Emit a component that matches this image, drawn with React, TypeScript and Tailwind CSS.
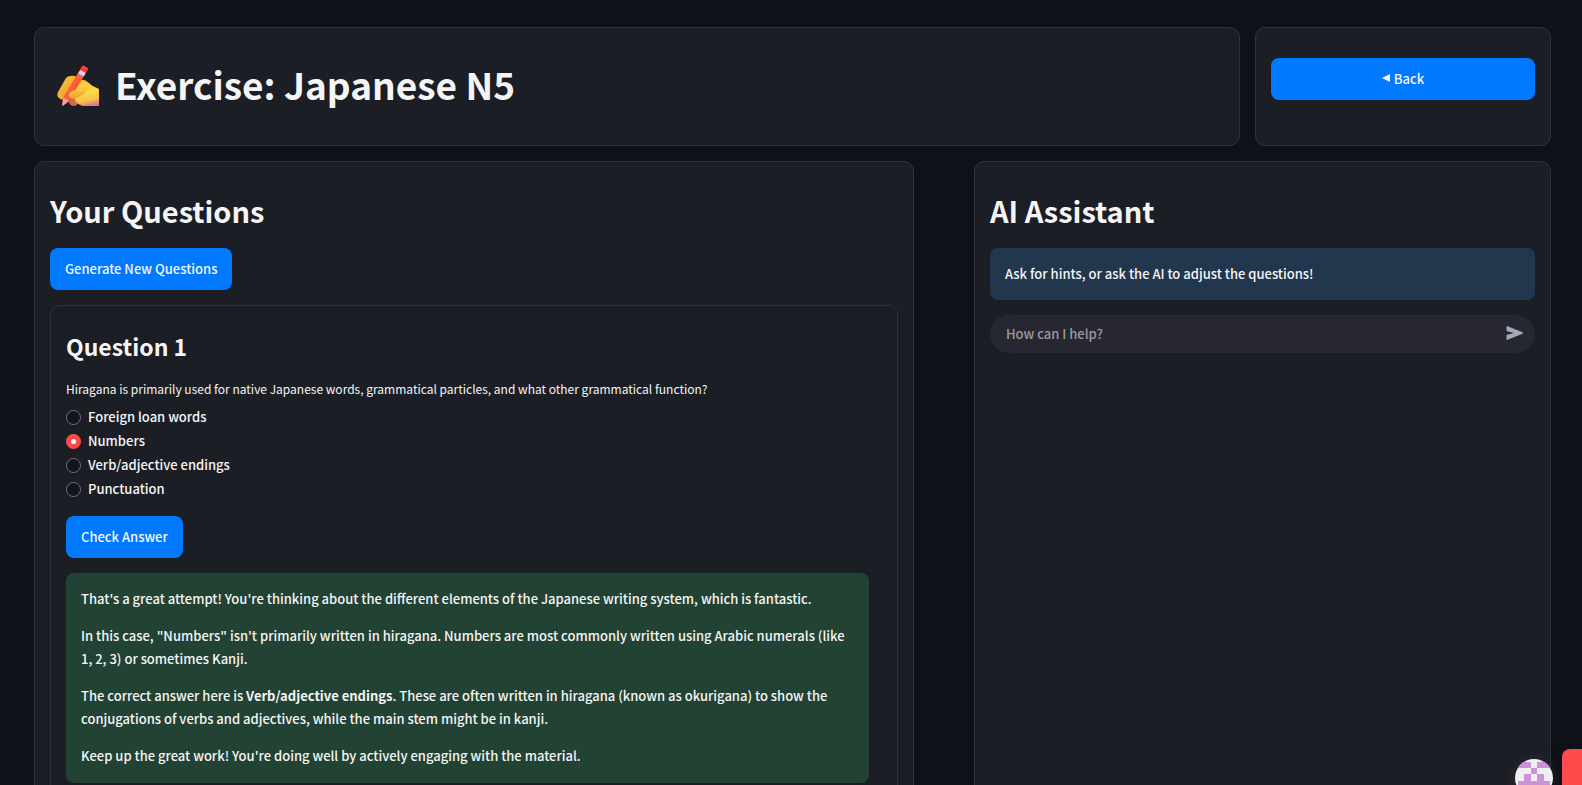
import { useState } from "react";
import type { ReactNode } from "react";

const OPTIONS = ["Foreign loan words", "Numbers", "Verb/adjective endings", "Punctuation"];

function Card({ children, className = "" }: { children: ReactNode; className?: string }) {
  return (
    <section className={`rounded-[10px] border border-[#2f323b] bg-[#1b1e25] px-[15px] ${className}`}>
      {children}
    </section>
  );
}

function PrimaryButton({ children, className = "" }: { children: ReactNode; className?: string }) {
  return (
    <button
      type="button"
      className={`flex h-[42px] items-center justify-center rounded-lg bg-[#0079ff] px-[15px] pb-[2px] text-[13px] leading-[23px] font-medium text-[#f5f5f5] ${className}`}
    >
      {children}
    </button>
  );
}

function WritingHand() {
  return (
    <svg viewBox="0 0 42 42" className="mt-1 h-[42px] w-[42px] shrink-0" role="img" aria-label="Writing hand">
      <defs>
        <linearGradient id="palm" x1="0.4" y1="0" x2="0.6" y2="1">
          <stop offset="0" stopColor="#f9c030" />
          <stop offset="0.45" stopColor="#fddb45" />
          <stop offset="0.78" stopColor="#f8c347" />
          <stop offset="1" stopColor="#e0709c" />
        </linearGradient>
        <linearGradient id="finger" x1="0" y1="0" x2="1" y2="1">
          <stop offset="0" stopColor="#fccb3a" />
          <stop offset="1" stopColor="#e99128" />
        </linearGradient>
        <linearGradient id="thumb" x1="0.5" y1="0" x2="0.5" y2="1">
          <stop offset="0" stopColor="#fdda47" />
          <stop offset="1" stopColor="#f2a437" />
        </linearGradient>
      </defs>
      <path d="M12 37c0-3 3-5 6-5s4 3 3 6c-1 2-2 3-4 3-3 0-5-2-5-4Z" fill="#d9654c" />
      <path
        d="M22 15c4-1 7 0 10 3 2 2 5 4 8 5 1.500.5 2 1 2 2v16H28c-4 0-8-2-10-6l1-17Z"
        fill="url(#palm)"
      />
      <path d="M9 13c3-3 10-3 12 0 1 3-1 5-3 7L8 33c-2 2-4 2-6 0-2-1-2-4-1-6Z" fill="url(#finger)" />
      <path
        d="M25 1.500q.6-1.200 1.800-.7l3.400 1.900q1 .8.500 1.800L12.200 36l-6 4.600q-1 .4-1-.6l.9-7.600Z"
        fill="#fa6338"
      />
      <path d="m25 1.500-2 3.600 5.600 3.100 2.100-3.700q.5-1-.5-1.800L26.800.8q-1.200-.5-1.800.7Z" fill="#f43c37" />
      <path d="m23.100 5-1.900 3.400 5.600 3.100 1.900-3.400Z" fill="#dccdf0" />
      <path d="m6.100 32.500 6.100 3.500-6 4.600q-1 .4-1-.6Z" fill="#f2a0a0" />
      <path d="M22 15.500 11.500 33" stroke="#e8532c" strokeWidth="1" />
      <path d="M26 18c-2 3-5 5-8 7-4 1-7 4-6 7 2 2 6 2 9 0 3-1 4-3 7-4 3-2 3-7-2-10Z" fill="url(#thumb)" />
      <path
        d="M14 32.500c3 1 6 .5 8-1.500 2-1 3-2.500 5-3"
        fill="none"
        stroke="#e8a135"
        strokeWidth="1"
        strokeLinecap="round"
      />
    </svg>
  );
}

function Avatar() {
  return (
    <svg viewBox="0 0 38 38" className="h-[38px] w-[38px]" role="img" aria-label="Profile">
      <defs>
        <clipPath id="round">
          <circle cx="19" cy="19" r="19" />
        </clipPath>
      </defs>
      <g clipPath="url(#round)">
        <rect width="38" height="38" fill="#f0f0f0" />
        <path
          d="M3 3h13v6H3ZM22 3h13v6H22ZM16 9h6v6h-6ZM9 15h7v7H9ZM22 15h7v7h-7ZM3 22h32v6H3ZM9 28h7v7H9ZM22 28h7v7h-7Z"
          fill="#cd90db"
        />
      </g>
    </svg>
  );
}

export default function App() {
  const [answer, setAnswer] = useState("Numbers");

  return (
    <div className="h-screen overflow-hidden bg-[#0e1117] font-['Noto_Sans_CJK_JP','Noto_Sans',sans-serif] text-[13px] leading-[23px] font-medium text-[#f5f5f5]">
      <main className="flex flex-col gap-[15px] pt-[27px] pr-[31px] pl-[34px]">
        <header className="grid grid-cols-[4.075fr_1fr] gap-[15px]">
          <Card className="h-[119px] pt-[32px]">
            <h1 className="flex items-center gap-[16px] pl-[7px] text-[37px] leading-[48px] font-bold">
              <WritingHand />
              Exercise: Japanese N5
            </h1>
          </Card>
          <Card className="pt-[30px]">
            <PrimaryButton className="w-full gap-1">
              <svg viewBox="0 0 8 8" className="h-2 w-2" aria-hidden="true">
                <path d="M0 4 8 0v8Z" fill="currentColor" />
              </svg>
              Back
            </PrimaryButton>
          </Card>
        </header>

        <div className="grid grid-cols-[1.525fr_1fr] gap-[60px]">
          <Card className="pt-[28px] pb-[15px]">
            <h2 className="mb-[18px] text-[29px] leading-[40px] font-bold">Your Questions</h2>
            <PrimaryButton>Generate New Questions</PrimaryButton>

            <Card className="mt-[15px] pt-[23px] pb-[15px]">
              <h3 className="text-[23px] leading-[34px] font-bold">Question 1</h3>
              <fieldset className="mt-[14px]">
                <legend className="pb-[5px] text-[12px] leading-[23px] font-normal">
                  Hiragana is primarily used for native Japanese words, grammatical particles, and what other
                  grammatical function?
                </legend>
                {OPTIONS.map((option) => (
                  <label key={option} className="flex h-[24px] items-center gap-[7px]">
                    <input
                      type="radio"
                      name="question-1"
                      checked={answer === option}
                      onChange={() => setAnswer(option)}
                      className="h-[15px] w-[15px] appearance-none rounded-full border border-[#73757a] bg-[#12151c] checked:border-[5px] checked:border-[#ff4b4b] checked:bg-white"
                    />
                    <span className="pb-[2px]">{option}</span>
                  </label>
                ))}
              </fieldset>
              <PrimaryButton className="mt-[15px]">Check Answer</PrimaryButton>
              <div className="mt-[15px] mr-[13px] flex flex-col gap-[14px] rounded-lg bg-[#224233] px-[15px] pt-[14px] pb-[16px]">
                <p>
                  That's a great attempt! You're thinking about the different elements of the Japanese writing
                  system, which is fantastic.
                </p>
                <p>
                  In this case, "Numbers" isn't primarily written in hiragana. Numbers are most commonly written
                  using Arabic numerals (like <span className="whitespace-nowrap">1, 2, 3)</span> or sometimes
                  Kanji.
                </p>
                <p>
                  The correct answer here is <strong className="font-bold">Verb/adjective endings</strong>. These
                  are often written in hiragana (known as okurigana) to show the conjugations of verbs and
                  adjectives, while the main stem might be in kanji.
                </p>
                <p>Keep up the great work! You're doing well by actively engaging with the material.</p>
              </div>
            </Card>
          </Card>

          <Card className="pt-[28px] pb-[15px]">
            <h2 className="mb-[18px] text-[29px] leading-[40px] font-bold">AI Assistant</h2>
            <p className="rounded-lg bg-[#22364d] px-[15px] py-[14px] leading-[24px]">
              Ask for hints, or ask the AI to adjust the questions!
            </p>
            <form
              onSubmit={(event) => event.preventDefault()}
              className="mt-[15px] flex h-[38px] items-center rounded-full bg-[#262730] pr-[10px] pb-[2px] pl-[16px]"
            >
              <input
                type="text"
                aria-label="Message to the assistant"
                placeholder="How can I help?"
                className="min-w-0 flex-1 bg-transparent outline-none placeholder:text-[#9a9a9e]"
              />
              <button type="submit" aria-label="Send" className="text-[#a3a8b8]">
                <svg viewBox="0 0 20 16" className="h-4 w-5" aria-hidden="true">
                  <path
                    d="M1.500 2v3.400q0 .7.700.9L9 8l-6.800 1.700q-.7.200-.7.900V14q0 1.200 1.200.8L17.500 8.700q1.200-.7 0-1.400L2.700 1.200Q1.500.8 1.500 2Z"
                    fill="currentColor"
                  />
                </svg>
              </button>
            </form>
          </Card>
        </div>
      </main>

      <div className="fixed right-[29px] -bottom-[12px] rounded-full shadow-[0_0_14px_rgba(60,60,60,0.5)]">
        <Avatar />
      </div>
      <div className="fixed right-0 bottom-0 h-[36px] w-[20px] rounded-tl-lg bg-[#ff4b4b]" />
    </div>
  );
}
